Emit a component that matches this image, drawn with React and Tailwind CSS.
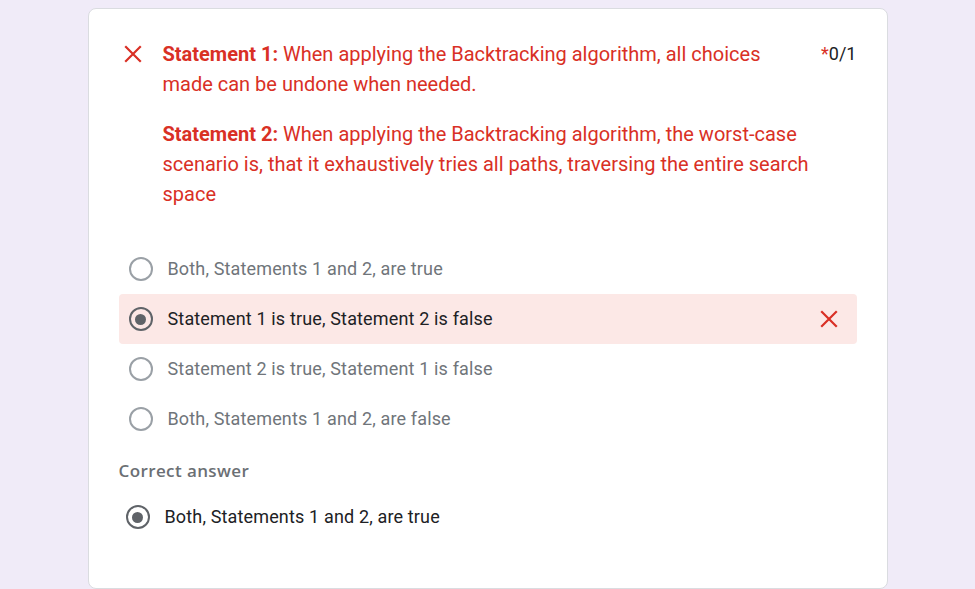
import React from "react";

const options = [
  { label: "Both, Statements 1 and 2, are true" },
  { label: "Statement 1 is true, Statement 2 is false", selected: true },
  { label: "Statement 2 is true, Statement 1 is false" },
  { label: "Both, Statements 1 and 2, are false" },
];

function CrossIcon({ className }) {
  return (
    <svg viewBox="0 0 24 24" className={className} fill="none">
      <path
        d="M5 5L19 19M19 5L5 19"
        stroke="currentColor"
        strokeWidth="2.2"
        strokeLinecap="square"
      />
    </svg>
  );
}

function Radio({ checked }) {
  return (
    <div
      className={
        "w-6 h-6 rounded-full border-2 flex items-center justify-center shrink-0 " +
        (checked ? "border-[#5f6368]" : "border-[#9aa0a6]")
      }
    >
      {checked && <div className="w-[11px] h-[11px] rounded-full bg-[#5f6368]" />}
    </div>
  );
}

function App() {
  return (
    <div className="min-h-screen bg-[#f0ebf8] pt-2 font-['Roboto',sans-serif]">
      <div className="w-[800px] mx-auto bg-white border border-[#dadce0] rounded-lg px-[30px] pt-[30px] pb-[46px]">
        {/* Question header */}
        <div className="flex items-start">
          <CrossIcon className="w-6 h-6 text-[#d93025] ml-[2px] mt-[3px] shrink-0" />
          <div className="ml-[18px] w-[649px] text-[20px] leading-[30px] text-[#d93025]">
            <p>
              <span className="font-bold">Statement 1:</span> When applying the
              Backtracking algorithm, all choices made can be undone when needed.
            </p>
            <p className="mt-5">
              <span className="font-bold">Statement 2:</span> When applying the
              Backtracking algorithm, the worst-case scenario is, that it
              exhaustively tries all paths, traversing the entire search space
            </p>
          </div>
          <div className="ml-auto text-[18px] leading-[30px] text-[#202124] shrink-0">
            <span className="text-[#d93025]">*</span>0/1
          </div>
        </div>

        {/* Options */}
        <div className="mt-[35px]">
          {options.map((o) => (
            <div
              key={o.label}
              className={
                "h-[50px] flex items-center pl-[10px] pr-4 rounded " +
                (o.selected ? "bg-[#fce8e6]" : "")
              }
            >
              <Radio checked={o.selected} />
              <span
                className={
                  "ml-[15px] flex-1 text-[18px] leading-6 tracking-[0.15px] -mt-px " +
                  (o.selected ? "text-[#202124]" : "text-[#70757a]")
                }
              >
                {o.label}
              </span>
              {o.selected && <CrossIcon className="w-6 h-6 text-[#d93025]" />}
            </div>
          ))}
        </div>

        {/* Correct answer */}
        <div className="mt-[15px] text-[17px] leading-6 font-semibold tracking-[0.4px] text-[#6b6f74] font-['Open_Sans',sans-serif]">
          Correct answer
        </div>
        <div className="mt-[9px] h-[50px] flex items-center pl-[7px]">
          <Radio checked />
          <span className="ml-[15px] text-[18px] leading-6 tracking-[0.15px] -mt-px text-[#202124]">
            Both, Statements 1 and 2, are true
          </span>
        </div>
      </div>
    </div>
  );
}

export default App;
